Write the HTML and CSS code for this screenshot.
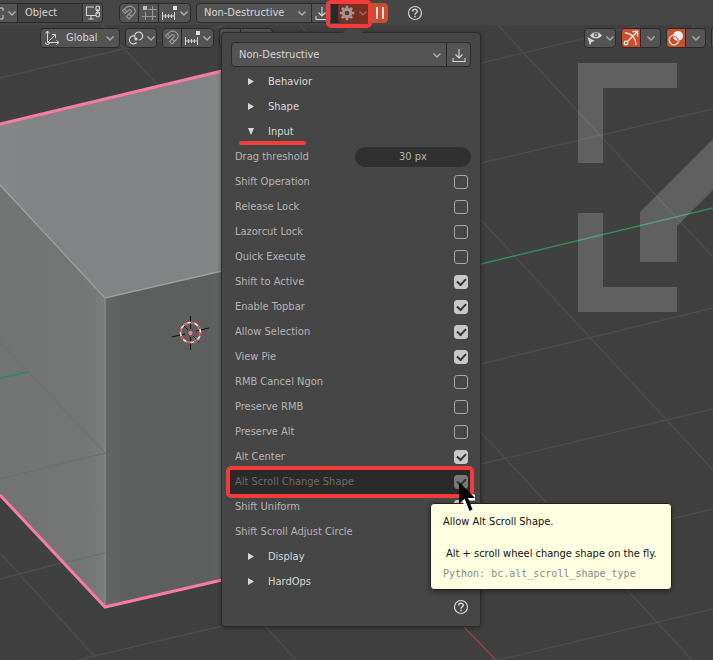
FILE: index.html
```html
<!DOCTYPE html>
<html lang="en">
<head>
<meta charset="utf-8">
<title>Viewport</title>
<link rel="stylesheet" href="styles.css">
</head>
<body>
<svg width="0" height="0" class="defs" aria-hidden="true">
  <symbol id="chev" viewBox="0 0 10 10"><path d="M1.500 3.500 5 7l3.500-3.500" fill="none" stroke="currentColor" stroke-width="1.500"/></symbol>
  <symbol id="down" viewBox="0 0 16 16"><path d="M8 2v9M4.500 7.500 8 11l3.500-3.500M2 11v3.500h12V11" fill="none" stroke="currentColor" stroke-width="1.100"/></symbol>
  <symbol id="magnet" viewBox="0 0 16 16"><path d="M1.500 5.500 6 2c5-3 10.500 3 7 7L8 14l-2.500-2.500L10 7C11 5 9 4 8 5L4 8.500zM3.500 4l2.500 3M8 9l2.500 2.500" fill="none" stroke="currentColor" stroke-width="1.100"/></symbol>
  <symbol id="snap" viewBox="0 0 16 16"><path d="M1.500 7v8M13.500 7v8M1.500 11h12M4.500 9v4M7.500 9v4M10.500 9v4" fill="none" stroke="currentColor"/><path d="M12 1h4v4h-4z" fill="#ddd"/></symbol>
  <symbol id="help" viewBox="0 0 16 16"><circle cx="8" cy="8" r="6.500" fill="none" stroke="currentColor" stroke-width="1.200"/><path d="M5.700 6.500c0-3 4.600-2.800 4.600-.3C10.300 7.700 8 7.800 8 9.700M8 10.800v1.500" fill="none" stroke="currentColor" stroke-width="1.500"/></symbol>
</svg>

<svg class="scene" aria-hidden="true">
  <defs>
    <linearGradient id="topFace" x1="0" y1="0" x2="1" y2="0"><stop offset="0" stop-color="#868788"/><stop offset=".15" stop-color="#828384"/><stop offset=".93" stop-color="#828384"/><stop offset="1" stop-color="#888a8a"/></linearGradient>
    <linearGradient id="leftFace" x1="0" y1="0" x2="1" y2="0"><stop offset="0" stop-color="#717472"/><stop offset=".8" stop-color="#737674"/><stop offset="1" stop-color="#7a7d7b"/></linearGradient>
    <linearGradient id="rightFace" x1="0" y1="0" x2="1" y2="0"><stop offset="0" stop-color="#646766"/><stop offset=".2" stop-color="#5c5f5e"/><stop offset=".9" stop-color="#5c5f5e"/><stop offset="1" stop-color="#646766"/></linearGradient>
  </defs>
  <g class="grid">
    <path d="M521 50 713 257M498 25l23 25M481 220 713 470M481 432 692 660M266 627l30 33M0 553l98 107M102 25l55 59M692 25l21 23M300 25l8 8"/>
    <path d="M481 63 640 25M481 163 713 109M481 364 713 308M481 464 713 409M481 564 713 509M498 660 713 609M0 78 225 25M0 579 61 563M78 660 222 626"/>
  </g>
  <path class="axis-y" d="M481 264 713 208"/>
  <path class="axis-x" d="M464 627 496 660"/>
  <path fill="url(#topFace)" d="M0 124 221 71V271L105 298 0 185z"/>
  <path fill="url(#leftFace)" d="M0 185 105 298V608L0 495z"/>
  <path fill="url(#rightFace)" d="M105 298 222 271V580L105 608z"/>
  <path class="edge" d="M0 185 105 298 222 271"/>
  <path class="edge soft" d="M105 298V606"/>
  <path class="faint" d="M0 479 105 453M63 563 105 553M0 342 105 453"/>
  <path class="axis-y" d="M0 378 28 372"/>
  <path class="outline" d="M0 124 222 71M0 495 105 607 222 580"/>
  <g class="marker">
    <path d="M190.500 316v13M190.500 337v13M172 337l13-3M196 331l13-3M182 324l6 6M193 336l6 6"/>
    <circle cx="190.500" cy="332.500" r="10" stroke="#eee"/>
    <circle cx="190.500" cy="332.500" r="10" stroke="#f0352f" stroke-dasharray="3.930"/>
    <circle cx="190.500" cy="333" r="2.500" class="origin"/>
  </g>
  <path class="shapes" d="M578 63h99v25h-74v75h-25zM578 213h25v74h74v25h-99zM640 212l73-73v51l-36 36v36h-37z"/>
</svg>

<header class="bars">
  <div class="bar bar-top">
    <div class="group flush">
      <button class="seg mode" aria-label="Mode"><svg width="5" height="16"><path d="M0 3h3v3M3 10v4H0" fill="none" stroke="currentColor"/></svg><svg class="chev"><use href="#chev"/></svg></button>
      <input class="seg object" value="Object" aria-label="Name">
      <button class="seg s20" aria-label="Link display"><svg class="ic" viewBox="0 0 16 16"><g fill="none" stroke="currentColor" stroke-width="1.100"><path d="M9 2H1.500v8.500H11M6 10.500v3M3.500 14h5"/><rect x="11" y="1" width="3.500" height="5" rx="1.700"/><rect x="11" y="7" width="3.500" height="5" rx="1.700"/><path d="M12.700 4v5"/></g></svg></button>
    </div>
    <div class="group gap-l">
      <button class="seg s19 dim" aria-label="Snap"><svg class="ic"><use href="#magnet"/></svg></button>
      <button class="seg s20 dim" aria-label="Grid snap"><svg class="ic" viewBox="0 0 16 16"><path d="M4.500 7v8M11.500 1v14M7 4.500h9M1 11.500h14" fill="none" stroke="currentColor"/><path d="M2 1h4v4H2z" fill="#bbb"/></svg></button>
      <button class="seg s32" aria-label="Increment"><svg class="ic"><use href="#snap"/></svg><svg class="chev"><use href="#chev"/></svg></button>
    </div>
    <div class="group">
      <div class="pick pick-top"><select aria-label="Preset"><option>Non-Destructive</option></select><svg class="chev"><use href="#chev"/></svg></div>
      <button class="seg s20" aria-label="Save preset"><svg class="ic"><use href="#down"/></svg></button>
    </div>
    <div class="tools">
      <button class="gear" aria-label="Settings"><svg class="ic" viewBox="0 0 16 16"><g stroke="currentColor" fill="none"><circle cx="8" cy="8" r="3.800" stroke-width="3"/><path d="M8 .8v3M8 12.200v3M.8 8h3M12.200 8h3M2.900 2.900 5 5M11 11l2.100 2.100M2.900 13.100 5 11M11 5l2.100-2.100" stroke-width="2.600"/></g></svg><svg class="chev"><use href="#chev"/></svg></button>
      <button class="pause" aria-label="Pause"><svg width="8" height="12"><path d="M0 0h2v12H0zM6 0h2v12H6z" fill="#ddd"/></svg></button>
    </div>
    <button class="help" aria-label="Help"><svg class="ic"><use href="#help"/></svg></button>
  </div>
  <div class="bar bar-view">
    <button class="group orient"><svg class="ic" viewBox="0 0 16 16"><path d="M3.500 1v11.500H15M1.500 3.500l2-2.500 2 2.500M12.500 10.500l2.500 2-2.500 2M4 12l7-7M8 4.500h3.500V8M1.500 12.500a2 2 0 0 0 4 0" fill="none" stroke="currentColor"/></svg><span>Global</span><svg class="chev"><use href="#chev"/></svg></button>
    <button class="group pivot" aria-label="Pivot"><svg class="ic" viewBox="0 0 16 16"><g fill="none" stroke="currentColor" stroke-width="1.200"><path d="M8.500 12.500A4 4 0 1 1 6 6"/><path d="M7.500 8.500A4 4 0 1 1 11 10"/></g><circle cx="8" cy="9" r="1.600" fill="currentColor"/></svg><svg class="chev"><use href="#chev"/></svg></button>
    <div class="group">
      <button class="seg s19 dim" aria-label="Magnet"><svg class="ic"><use href="#magnet"/></svg></button>
      <button class="seg s32" aria-label="Snapping"><svg class="ic"><use href="#snap"/></svg><svg class="chev"><use href="#chev"/></svg></button>
    </div>
    <div class="group"><button class="seg s20" aria-label="Proportional"></button><button class="seg s32" aria-label="Falloff"></button></div>
    <div class="view-tools">
      <button class="group pivot" aria-label="Visibility"><svg class="ic" viewBox="0 0 16 16"><path d="M3 5.500c3-4.500 9-4.500 12 0-3 4-9 4-12 0z" fill="currentColor"/><circle cx="9" cy="5" r="2.300" fill="#545454"/><circle cx="9" cy="5" r="1" fill="currentColor"/><path d="M.5 7 8 11l-3.500 1L3 15.500z" fill="currentColor"/></svg><svg class="chev"><use href="#chev"/></svg></button>
      <div class="group"><button class="seg s19 on" aria-label="Gizmos"><svg class="ic" viewBox="0 0 16 16"><path d="M2 3c6 0 11 5 11 12M4.500 11.500 14 2M9.500 1.500h5v5" fill="none" stroke="currentColor" stroke-width="1.300"/><circle cx="3" cy="13" r="1.800" fill="none" stroke="currentColor" stroke-width="1.300"/></svg></button><button class="seg s20" aria-label="Gizmo options"><svg class="chev"><use href="#chev"/></svg></button></div>
      <div class="group"><button class="seg s19 on" aria-label="Overlays"><svg class="ic" viewBox="0 0 16 16"><circle cx="10" cy="6" r="5" fill="currentColor"/><circle cx="6" cy="10" r="4.800" fill="none" stroke="currentColor" stroke-width="1.200"/><path d="M5.500 6.500A5 5 0 0 1 10.500 11" fill="none" stroke="#c94f2d"/></svg></button><button class="seg s20" aria-label="Overlay options"><svg class="chev"><use href="#chev"/></svg></button></div>
      <div class="group cut"></div>
    </div>
  </div>
</header>

<main class="panel">
  <div class="group preset">
    <div class="pick"><select aria-label="Tool preset"><option>Non-Destructive</option></select><svg class="chev"><use href="#chev"/></svg></div>
    <button class="seg s24" aria-label="Save"><svg class="ic"><use href="#down"/></svg></button>
  </div>
  <button class="fold"><i class="tri"></i>Behavior</button>
  <button class="fold"><i class="tri"></i>Shape</button>
  <button class="fold open"><i class="tri"></i>Input</button>
  <label class="row">Drag threshold<input class="num" value="30 px"></label>
  <label class="row">Shift Operation<input type="checkbox"></label>
  <label class="row">Release Lock<input type="checkbox"></label>
  <label class="row">Lazorcut Lock<input type="checkbox"></label>
  <label class="row">Quick Execute<input type="checkbox"></label>
  <label class="row">Shift to Active<input type="checkbox" checked></label>
  <label class="row">Enable Topbar<input type="checkbox" checked></label>
  <label class="row">Allow Selection<input type="checkbox" checked></label>
  <label class="row">View Pie<input type="checkbox" checked></label>
  <label class="row">RMB Cancel Ngon<input type="checkbox"></label>
  <label class="row">Preserve RMB<input type="checkbox"></label>
  <label class="row">Preserve Alt<input type="checkbox"></label>
  <label class="row">Alt Center<input type="checkbox" checked></label>
  <label class="row current">Alt Scroll Change Shape<input type="checkbox" checked></label>
  <label class="row">Shift Uniform<input type="checkbox" checked></label>
  <label class="row">Shift Scroll Adjust Circle<input type="checkbox"></label>
  <button class="fold"><i class="tri"></i>Display</button>
  <button class="fold"><i class="tri"></i>HardOps</button>
  <div class="row foot"><button class="help" aria-label="Panel help"><svg class="ic"><use href="#help"/></svg></button></div>
</main>

<div class="tip" role="tooltip">
  <p>Allow Alt Scroll Shape.</p>
  <p class="detail">Alt + scroll wheel change shape on the fly.</p>
  <p class="python">Python: bc.alt_scroll_shape_type</p>
</div>
<svg class="pointer" viewBox="0 0 22 34" aria-hidden="true"><path d="M8 19 12.500 31M7.500 17.500H18" fill="none" stroke="#fff" stroke-width="6"/><path d="M2 2v22l5.500-5.500L12.500 31l3-1.500L11 18h7z" fill="#000"/></svg>
</body>
</html>
```
FILE: styles.css
```css
*, *::before, *::after { box-sizing: border-box; }

body {
  margin: 0;
  min-height: 100vh;
  position: relative;
  overflow: hidden;
  background: #404040;
  color: #d4d4d4;
  font: 11px/16px "DejaVu Sans Condensed", "DejaVu Sans", sans-serif;
}

button, input, select {
  margin: 0;
  padding: 0;
  border: 0;
  background: none;
  color: inherit;
  font: inherit;
}

svg { display: block; flex: none; }
.defs { position: absolute; }

/* Viewport drawing */
.scene { position: absolute; inset: 0; width: 100%; height: 100%; }
.grid { fill: none; stroke: #4d4d4d; stroke-width: 1.3; }
.axis-y { stroke: #32895a; stroke-width: 1.5; }
.axis-x { stroke: #964040; stroke-width: 1.5; }
.edge { fill: none; stroke: #9da09e; stroke-width: 1.3; }
.soft { stroke: #8b8e8c; }
.faint { fill: none; stroke: #6b6e6c; }
.outline { fill: none; stroke: #f87ca6; stroke-width: 3; }
.marker { fill: none; stroke: #111; }
.marker circle { stroke-width: 1.5; }
.marker .origin { fill: #ff80a8; stroke: #333; stroke-width: 0.5; }
.shapes { fill: #fff; fill-opacity: 0.17; }

/* Header bars */
.bars { position: relative; }
.bar { display: flex; align-items: center; gap: 5px; }
.bar-top { height: 25px; background: #464646; }
.bar-view { height: 26px; padding-left: 40px; }

.group {
  display: flex;
  align-items: center;
  flex: none;
  height: 20px;
  border: 1px solid #2b2b2b;
  border-radius: 4px;
  background: #545454;
  overflow: hidden;
}
.flush { border-left: 0; border-radius: 0 4px 4px 0; }
.gap-l { margin-left: 11px; }

.seg {
  display: flex;
  align-items: center;
  justify-content: center;
  gap: 2px;
  flex: none;
  height: 100%;
  border-left: 1px solid #2b2b2b;
}
.seg:first-child { border-left: 0; }
.s19 { width: 18px; }
.s20 { width: 20px; }
.s24 { width: 24px; }
.s32 { width: 32px; }
.mode { width: 17px; }
.object { width: 65px; padding-left: 7px; background: #424242; }
.on { background: #c94f2d; color: #eee; }
.dim { color: #999; }
.ic { width: 16px; height: 16px; }
.chev { width: 10px; height: 10px; color: #aaa; }

.pick { display: flex; align-items: center; flex: 1; height: 100%; }
.pick select { flex: 1; height: 100%; padding-left: 7px; appearance: none; }
.pick .chev { margin: 0 4px 0 -14px; pointer-events: none; }
.pick-top { flex: none; width: 114px; }

.tools {
  position: relative;
  display: flex;
  height: 20px;
  padding-left: 7px;
  margin-left: -6px;
  background: #2a2a2a;
  border-radius: 0 4px 4px 0;
}
.tools::after {
  content: "";
  position: absolute;
  left: -5px;
  top: -3px;
  width: 46px;
  height: 28px;
  border: 4px solid #f23c3c;
  border-radius: 5px;
}
.gear {
  display: flex;
  align-items: center;
  gap: 3px;
  width: 34px;
  padding-left: 1px;
  border-radius: 4px 0 0 4px;
  background: #7c2f1c;
  color: #999;
}
.gear .chev { color: #946c62; }
.pause {
  display: flex;
  align-items: center;
  justify-content: center;
  width: 16px;
  background: #c94f2d;
  border-radius: 0 4px 4px 0;
}
.help { display: block; width: 16px; height: 16px; }
.bar-top .help { margin-left: 14px; }

.orient { width: 80px; gap: 6px; padding: 0 4px 0 3px; }
.orient span { flex: 1; text-align: left; }
.pivot { width: 32px; gap: 2px; padding-left: 2px; }
.view-tools { display: flex; gap: 5px; margin-left: auto; }
.cut { width: 2px; border-right: 0; border-radius: 4px 0 0 4px; }

/* Popover */
.panel {
  position: absolute;
  left: 221px;
  top: 32px;
  width: 260px;
  padding: 9px 9px 7px;
  border: 1px solid #2c2c2c;
  border-radius: 4px;
  background: #464646;
  box-shadow: 0 1px 5px rgba(0, 0, 0, 0.4);
  color: #b4b4b4;
}
.panel::before {
  content: "";
  position: absolute;
  left: 121px;
  top: -5px;
  width: 20px;
  height: 5px;
  background: #464646;
  clip-path: polygon(25% 0, 75% 0, 100% 100%, 0 100%);
}
.preset { height: 25px; margin-bottom: 2px; color: #d4d4d4; }

.fold {
  position: relative;
  display: flex;
  align-items: center;
  width: 100%;
  height: 25px;
  padding-left: 17px;
  color: #d8d8d8;
}
.tri {
  width: 6px;
  height: 7px;
  margin-right: 14px;
  background: currentColor;
  clip-path: polygon(0 0, 100% 50%, 0 100%);
}
.open .tri { clip-path: polygon(0 0, 100% 0, 50% 100%); }
.open::after {
  content: "";
  position: absolute;
  left: 8px;
  bottom: -1px;
  width: 67px;
  height: 4px;
  border-radius: 2px;
  background: #f23c3c;
}

.row {
  position: relative;
  display: flex;
  align-items: center;
  justify-content: space-between;
  height: 25px;
  padding-left: 4px;
}
.num {
  width: 116px;
  height: 20px;
  border-radius: 10px;
  background: #303030;
  text-align: center;
}
.row input[type="checkbox"] {
  appearance: none;
  width: 14px;
  height: 14px;
  margin-right: 3px;
  border: 1px solid #a8a8a8;
  border-radius: 3px;
}
.row input[type="checkbox"]:checked { background: #c8c8c8; border-color: #c8c8c8; }
.row input[type="checkbox"]:checked::after {
  content: "";
  display: block;
  width: 9px;
  height: 6px;
  margin: 2px 0 0 2px;
  border: solid #333;
  border-width: 0 0 2px 2px;
  transform: rotate(-47deg);
}
.current { color: #6c6c6c; z-index: 0; }
.current::before {
  content: "";
  position: absolute;
  inset: -3px -3px -4px -5px;
  border: 4px solid #f23c3c;
  border-radius: 5px;
  background: #2a2a2a;
  z-index: -1;
}
.row.current input:checked { background: #787878; border-color: #787878; }
.foot { justify-content: flex-end; padding-right: 2px; color: #d8d8d8; }

/* Tooltip */
.tip {
  position: absolute;
  left: 430px;
  top: 503px;
  width: 242px;
  padding: 10px 12px 7px;
  border: 1px solid #222;
  border-radius: 4px;
  background: #ffffe1;
  color: #111;
  box-shadow: 0 2px 5px rgba(0, 0, 0, 0.4);
  white-space: nowrap;
}
.tip p { margin: 0; }
.tip .detail { margin: 16px 0 4px 3px; }
.tip .python { color: #888; font: 10px/16px "DejaVu Sans Mono", monospace; }
.pointer { position: absolute; left: 457px; top: 480px; width: 22px; height: 34px; }
```
